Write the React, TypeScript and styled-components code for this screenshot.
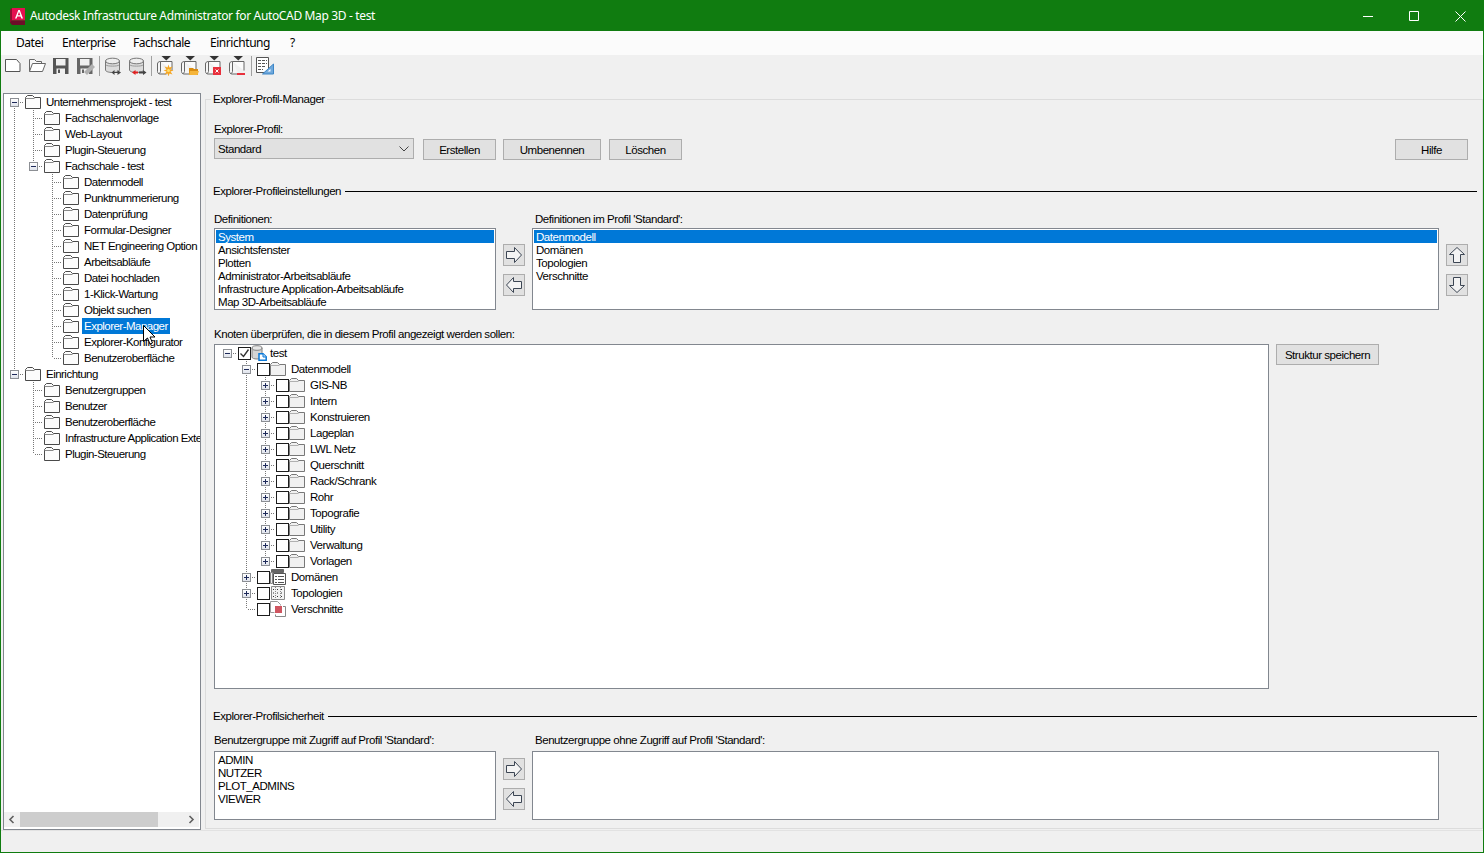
import { FC } from 'react';
import styled, { createGlobalStyle } from 'styled-components';

const GlobalStyle = createGlobalStyle`
  html, body {
    margin: 0;
    padding: 0;
    overflow: hidden;
    background: #f0f0f0;
  }
  * {
    box-sizing: border-box;
  }
`;

const uiFont = `"Liberation Sans", Arial, sans-serif`;
const titleFont = `"Noto Sans", "Open Sans", sans-serif`;

const Window = styled.div`
  width: 1484px;
  height: 853px;
  border: 1px solid #107c10;
  display: flex;
  flex-direction: column;
  background: #f0f0f0;
  color: #000;
  font: 11.5px/14px ${uiFont};
  letter-spacing: -0.45px;
`;

const TitleBar = styled.div`
  height: 30px;
  flex: none;
  display: flex;
  align-items: center;
  background: #107c10;
  color: #fff;
  padding-left: 9px;
  font: 12px/16px ${titleFont};
  letter-spacing: -0.35px;
`;

const TitleText = styled.span`
  margin-left: 5px;
  flex: 1;
`;

const WinButton = styled.div`
  width: 46px;
  height: 30px;
  display: flex;
  align-items: center;
  justify-content: center;
`;

const MenuBar = styled.div`
  height: 24px;
  flex: none;
  display: flex;
  align-items: center;
  padding-left: 6px;
  background: #fbfbfb;
  font: 12px/16px ${titleFont};
  letter-spacing: -0.45px;
`;

const MenuItem = styled.span<{ $w: number }>`
  width: ${(p) => p.$w}px;
  padding-left: 9px;
`;

const Toolbar = styled.div`
  height: 30px;
  flex: none;
  display: flex;
  align-items: flex-start;
`;

const ToolButton = styled.div`
  width: 24px;
  height: 22px;
  display: flex;
  align-items: center;
  justify-content: center;
`;

const ToolSep = styled.div`
  width: 4px;
  height: 22px;
  display: flex;
  justify-content: center;
  &::before {
    content: '';
    width: 1px;
    height: 20px;
    margin-top: 1px;
    background: #a0a0a0;
  }
`;

const Main = styled.div`
  flex: 1;
  min-height: 0;
  display: flex;
  padding: 8px 0 0 2px;
`;

const TreePanel = styled.div`
  position: relative;
  width: 198px;
  flex: none;
  height: 737px;
  display: flex;
  flex-direction: column;
  background: #fff;
  border: 1px solid #82878f;
`;

const TreeBody = styled.div<{ $pad: number }>`
  flex: 1;
  min-height: 0;
  overflow: hidden;
  padding-left: ${(p) => p.$pad}px;
  letter-spacing: -0.52px;
`;

const Row = styled.div`
  height: 16px;
  display: flex;
  align-items: center;
  white-space: nowrap;
`;

const Cell = styled.div<{ $code: string }>`
  position: relative;
  width: 19px;
  height: 16px;
  flex: none;
  &::before {
    content: '';
    position: absolute;
    left: 9px;
    width: 1px;
    top: ${(p) => (p.$code === 'r' ? '8px' : '0')};
    bottom: ${(p) => (p.$code === 'L' ? '8px' : '0')};
    display: ${(p) => (p.$code === ' ' || p.$code === '-' ? 'none' : 'block')};
    background: repeating-linear-gradient(to bottom, #777 0 1px, transparent 1px 2px);
  }
  &::after {
    content: '';
    position: absolute;
    left: 10px;
    right: 0;
    top: 8px;
    height: 1px;
    display: ${(p) => (p.$code === ' ' || p.$code === '|' ? 'none' : 'block')};
    background: repeating-linear-gradient(to right, transparent 0 1px, #777 1px 2px);
  }
`;

const Expander = styled.div`
  position: absolute;
  z-index: 1;
  left: 5px;
  top: 4px;
  width: 9px;
  height: 9px;
  border: 1px solid #8c8f94;
  background: linear-gradient(#fff, #dfe3ec);
  display: flex;
  align-items: center;
  justify-content: center;
`;

const TreeIconBox = styled.div<{ $w: number; $ml: number }>`
  width: ${(p) => p.$w}px;
  margin-left: ${(p) => p.$ml}px;
  height: 16px;
  flex: none;
  display: flex;
  align-items: center;
`;

const CheckBox = styled.div`
  width: 13px;
  height: 13px;
  margin-left: 1px;
  flex: none;
  background: #fff;
  border: 1px solid #1c1c1c;
  display: flex;
  align-items: center;
  justify-content: center;
`;

const NodeLabel = styled.span<{ $sel?: boolean; $ml: number }>`
  margin-left: ${(p) => p.$ml}px;
  padding: 0 2px;
  height: 16px;
  line-height: 16px;
  background: ${(p) => (p.$sel ? '#0078d7' : 'transparent')};
  color: ${(p) => (p.$sel ? '#fff' : '#000')};
`;

const ScrollBar = styled.div`
  height: 15px;
  flex: none;
  margin: 0 1px 2px 0;
  display: flex;
  align-items: center;
  background: #f0f0f0;
`;

const ScrollEnd = styled.div`
  width: 15px;
  height: 15px;
  flex: none;
  display: flex;
  align-items: center;
  justify-content: center;
`;

const ScrollTrack = styled.div`
  flex: 1;
  height: 15px;
  padding-left: 1px;
`;

const ScrollThumb = styled.div`
  width: 138px;
  height: 15px;
  background: #cdcdcd;
`;

const PointerWrap = styled.div`
  position: absolute;
  left: 139px;
  top: 231px;
  z-index: 2;
  line-height: 0;
`;

const Manager = styled.fieldset`
  flex: none;
  width: 1278px;
  height: 736px;
  margin: 0 0 0 4px;
  padding: 0 5px 0 8px;
  border: 1px solid #dcdcdc;
  min-width: 0;
`;

const ManagerLegend = styled.legend`
  margin-left: -3px;
  padding: 0 2px;
  line-height: 12px;
  height: 12px;
`;

const FieldLabel = styled.div<{ $mt: number }>`
  height: 14px;
  margin-top: ${(p) => p.$mt}px;
`;

const ProfileRow = styled.div`
  display: flex;
  align-items: flex-start;
  margin-top: 2px;
  height: 22px;
`;

const Combo = styled.div`
  width: 200px;
  height: 21px;
  display: flex;
  align-items: center;
  justify-content: space-between;
  padding: 0 4px 0 3px;
  background: #e1e1e1;
  border: 1px solid #adadad;
`;

const PushButton = styled.div<{ $w: number; $ml?: number; $mt?: number; $auto?: boolean }>`
  width: ${(p) => p.$w}px;
  height: 21px;
  margin-top: ${(p) => p.$mt ?? 0}px;
  margin-left: ${(p) => (p.$auto ? 'auto' : `${p.$ml ?? 0}px`)};
  margin-right: ${(p) => (p.$auto ? '9px' : '0')};
  flex: none;
  display: flex;
  align-items: center;
  justify-content: center;
  background: #e1e1e1;
  border: 1px solid #adadad;
`;

const Section = styled.div<{ $mt: number }>`
  display: flex;
  align-items: center;
  height: 14px;
  margin: ${(p) => p.$mt}px 0 0 -1px;
  gap: 4px;
  white-space: nowrap;
  &::after {
    content: '';
    flex: 1;
    height: 1px;
    background: #000;
  }
`;

const PairLabels = styled.div<{ $mt: number }>`
  display: grid;
  grid-template-columns: 318px 1fr;
  height: 14px;
  margin-top: ${(p) => p.$mt}px;
`;

const PairLabelRight = styled.div`
  padding-left: 3px;
`;

const PairRow = styled.div<{ $mt: number; $h: number }>`
  display: flex;
  height: ${(p) => p.$h}px;
  margin-top: ${(p) => p.$mt}px;
`;

const ListBox = styled.div<{ $w: number }>`
  width: ${(p) => p.$w}px;
  height: 100%;
  flex: none;
  padding: 1px;
  background: #fff;
  border: 1px solid #82878f;
  overflow: hidden;
`;

const ListItem = styled.div<{ $sel?: boolean }>`
  height: 13px;
  line-height: 15px;
  padding-left: 2px;
  white-space: nowrap;
  background: ${(p) => (p.$sel ? '#0078d7' : 'transparent')};
  color: ${(p) => (p.$sel ? '#fff' : '#000')};
`;

const ArrowColumn = styled.div<{ $top: number; $w: number }>`
  width: ${(p) => p.$w}px;
  flex: none;
  padding: ${(p) => p.$top}px 0 0 7px;
  display: flex;
  flex-direction: column;
  gap: 8px;
`;

const ArrowButton = styled.div`
  width: 22px;
  height: 22px;
  display: flex;
  align-items: center;
  justify-content: center;
  background: #e1e1e1;
  border: 1px solid #adadad;
`;

const StructureRow = styled.div`
  display: flex;
  align-items: flex-start;
  height: 345px;
  margin-top: 3px;
`;

const StructureTree = styled.div`
  width: 1055px;
  height: 345px;
  flex: none;
  background: #fff;
  border: 1px solid #82878f;
  overflow: hidden;
  padding-left: 3px;
`;

const StatusBar = styled.div`
  height: 22px;
  flex: none;
  border-top: 1px solid #e2e2e2;
`;

const FolderIcon: FC<{ $light?: boolean }> = ({ $light }) => (
  <svg width="16" height="14" viewBox="0 0 16 14">
    <path
      d="M.5 13.5V2.5L2.5.5H7.5L9.5 2.5H15.5V13.5Z"
      fill={$light ? '#f1f1f1' : '#fcfcfc'}
      stroke={$light ? '#787878' : '#4a4a4a'}
    />
    <path d="M.5 3.5H9.5" stroke={$light ? '#b0b0b0' : '#8a8a8a'} />
  </svg>
);

const DbDocIcon = () => (
  <svg width="16" height="16" viewBox="0 0 16 16">
    <path d="M1 3v9c0 1.300 2.200 2 5 2s5-.7 5-2V3z" fill="#d4d4d4" stroke="#808080" />
    <ellipse cx="6" cy="3" rx="5" ry="2.300" fill="#e6e6e6" stroke="#808080" />
    <path d="M8 8.700h4l3.200 3v3.600H8z" fill="#fff" stroke="#0a78d6" strokeWidth="1.500" />
    <path d="M12 8.700V12h3.200" fill="#bcdaf6" stroke="#0a78d6" />
  </svg>
);

const DomainIcon = () => (
  <svg width="16" height="16" viewBox="0 0 16 16">
    <path d="M1.5.5h12v3h-12z" fill="#666" stroke="#666" />
    <path d="M.5 3.5h2v11h-2z" fill="#eee" stroke="#888" />
    <path d="M3.5 4.5h12v11h-12z" fill="#fff" stroke="#555" />
    <path d="M5 7.5h2M8 7.5h6M5 10.5h2M8 10.5h6M5 13.5h2M8 13.5h6" stroke="#555" />
  </svg>
);

const TopologyIcon = () => (
  <svg width="16" height="16" viewBox="0 0 16 16">
    <path d="M1.5 1.5h13v13h-13z" fill="#f4f4f4" stroke="#8a8a8a" />
    <path
      d="M3 4.5h2M7 4.5h2M11 4.5h2M3 8h2M7 8h2M11 8h2M3 11.5h2M7 11.5h2M11 11.5h2"
      stroke="#333"
      strokeDasharray="1 1"
    />
    <path d="M5.5 2v12M10.5 2v12" stroke="#888" strokeDasharray="1 1" />
  </svg>
);

const CutIcon = () => (
  <svg width="16" height="16" viewBox="0 0 16 16">
    <path d="M.5 .5h7l3 3v1" fill="#fff" stroke="#999" />
    <path d="M.5 .5v11h4" fill="none" stroke="#999" />
    <path d="M13 5.500h2.500v10h-10v-2" fill="none" stroke="#888" />
    <rect x="5" y="5" width="7" height="7" fill="#cf5560" />
  </svg>
);

const nodeIcons: Record<string, JSX.Element> = {
  folder: <FolderIcon />,
  light: <FolderIcon $light />,
  db: <DbDocIcon />,
  domain: <DomainIcon />,
  topo: <TopologyIcon />,
  cut: <CutIcon />,
};

type Node = {
  cells: string;
  exp?: '+' | '-';
  icon: string;
  label: string;
  sel?: boolean;
  check?: boolean;
  checked?: boolean;
};

const ExpanderMark: FC<{ open: boolean }> = ({ open }) => (
  <svg width="7" height="7" viewBox="0 0 7 7">
    <path d={open ? 'M1 3.5h5' : 'M1 3.5h5M3.5 1v5'} stroke="#1e2a5a" />
  </svg>
);

const TreeRow: FC<{ node: Node }> = ({ node }) => {
  const codes = node.cells.split('');
  const last = codes.length - 1;
  const isRoot = codes.length === 1;
  return (
    <Row>
      {codes.map((code, i) => (
        <Cell key={i} $code={code}>
          {i === last && node.exp && (
            <Expander>
              <ExpanderMark open={node.exp === '-'} />
            </Expander>
          )}
        </Cell>
      ))}
      {node.check && (
        <CheckBox>
          {node.checked && (
            <svg width="11" height="11" viewBox="0 0 11 11">
              <path d="M1.500 5.500l3 3 5-7" fill="none" stroke="#333" strokeWidth="1.400" />
            </svg>
          )}
        </CheckBox>
      )}
      <TreeIconBox $w={16} $ml={node.check ? 0 : 1}>
        {nodeIcons[node.icon]}
      </TreeIconBox>
      <NodeLabel $sel={node.sel} $ml={node.check ? (isRoot ? 1 : 3) : 3}>
        {node.label}
      </NodeLabel>
    </Row>
  );
};

const projectTree: Node[] = [
  { cells: 'r', exp: '-', icon: 'folder', label: 'Unternehmensprojekt - test' },
  { cells: '|T', icon: 'folder', label: 'Fachschalenvorlage' },
  { cells: '|T', icon: 'folder', label: 'Web-Layout' },
  { cells: '|T', icon: 'folder', label: 'Plugin-Steuerung' },
  { cells: '|L', exp: '-', icon: 'folder', label: 'Fachschale - test' },
  { cells: '| T', icon: 'folder', label: 'Datenmodell' },
  { cells: '| T', icon: 'folder', label: 'Punktnummerierung' },
  { cells: '| T', icon: 'folder', label: 'Datenprüfung' },
  { cells: '| T', icon: 'folder', label: 'Formular-Designer' },
  { cells: '| T', icon: 'folder', label: 'NET Engineering Option' },
  { cells: '| T', icon: 'folder', label: 'Arbeitsabläufe' },
  { cells: '| T', icon: 'folder', label: 'Datei hochladen' },
  { cells: '| T', icon: 'folder', label: '1-Klick-Wartung' },
  { cells: '| T', icon: 'folder', label: 'Objekt suchen' },
  { cells: '| T', icon: 'folder', label: 'Explorer-Manager', sel: true },
  { cells: '| T', icon: 'folder', label: 'Explorer-Konfigurator' },
  { cells: '| L', icon: 'folder', label: 'Benutzeroberfläche' },
  { cells: 'L', exp: '-', icon: 'folder', label: 'Einrichtung' },
  { cells: ' T', icon: 'folder', label: 'Benutzergruppen' },
  { cells: ' T', icon: 'folder', label: 'Benutzer' },
  { cells: ' T', icon: 'folder', label: 'Benutzeroberfläche' },
  { cells: ' T', icon: 'folder', label: 'Infrastructure Application Extension' },
  { cells: ' L', icon: 'folder', label: 'Plugin-Steuerung' },
];

const modelFolders = [
  'GIS-NB',
  'Intern',
  'Konstruieren',
  'Lageplan',
  'LWL Netz',
  'Querschnitt',
  'Rack/Schrank',
  'Rohr',
  'Topografie',
  'Utility',
  'Verwaltung',
  'Vorlagen',
];

const structureTree: Node[] = [
  { cells: '-', exp: '-', icon: 'db', label: 'test', check: true, checked: true },
  { cells: ' T', exp: '-', icon: 'light', label: 'Datenmodell', check: true },
  ...modelFolders.map(
    (label, i): Node => ({
      cells: i === modelFolders.length - 1 ? ' |L' : ' |T',
      exp: '+',
      icon: 'light',
      label,
      check: true,
    }),
  ),
  { cells: ' T', exp: '+', icon: 'domain', label: 'Domänen', check: true },
  { cells: ' T', exp: '+', icon: 'topo', label: 'Topologien', check: true },
  { cells: ' L', icon: 'cut', label: 'Verschnitte', check: true },
];

const BlockArrow: FC<{ turn: number }> = ({ turn }) => (
  <svg width="18" height="18" viewBox="0 0 18 18" style={{ transform: `rotate(${turn}deg)` }}>
    <path
      d="M1.5 5.5h8V1.5L16.5 9l-7 7.5v-4h-8z"
      fill="#f4f4f4"
      stroke="#3c4654"
      strokeLinejoin="miter"
    />
  </svg>
);

const AppLogo = () => (
  <svg width="15" height="17" viewBox="0 0 15 17">
    <path d="M2 0h13v12.5H2z" fill="#e51050" />
    <path d="M0 1.5l2-1.5v13l-2 1.5z" fill="#8c1030" />
    <path d="M0 14.5l2-2h13v4.500H2z" fill="#6d0d28" />
    <path d="M5 10.500L8.300 2h1.500l3.200 8.500h-1.700l-.7-2H7.300l-.7 2zM7.800 7.200h2.500L9 3.800z" fill="#fff" />
  </svg>
);

const floppy = (color: string) => (
  <g transform="translate(1 1)">
    <path d="M1 1h15.500v16H1z" fill={color} />
    <path d="M4 2h9.500v6.500H4z" fill="#f0f0f0" />
    <path d="M4.500 11.500h8.500v5.500H4.500z" fill="#f0f0f0" />
    <path d="M6 12.500h2v3.500H6z" fill={color} />
  </g>
);

const cylinder = (
  <>
    <path d="M2.500 5v9c0 1.400 3 2.500 7 2.500s7-1.100 7-2.500V5z" fill="#dcdcdc" stroke="#777" />
    <ellipse cx="9.500" cy="5" rx="7" ry="2.800" fill="#eee" stroke="#777" />
    <path d="M3 9c1 1.500 12 1.500 13 0" fill="none" stroke="#999" />
  </>
);

const scroll = (
  <>
    <path
      d="M5.500 5.500C3.500 5.500 2.500 6.500 2.500 8v7.500c0 1.200 1 2.500 2.500 2.500h6.500"
      fill="#f6f6f6"
      stroke="#666"
    />
    <path d="M5.500 5.500h11.500v9" fill="#fbfbfb" stroke="#666" />
    <path d="M5.500 5.500v10c0 1-1 2-2 2" fill="none" stroke="#666" />
    <path d="M6.500 0h9.500l-4.750 4.500z" fill="#333" />
  </>
);

const toolIcons: Record<string, JSX.Element> = {
  new: <path d="M2.500 3.500h11l3.500 4v8H2.500z" fill="#fff" stroke="#555" />,
  open: (
    <>
      <path d="M2.500 15.500v-12h5l2 2h5v2" fill="#f8f8f8" stroke="#666" />
      <path d="M2.500 15.500l3-8h13l-3 8z" fill="#fff" stroke="#666" />
    </>
  ),
  save: floppy('#555'),
  saveAs: (
    <>
      {floppy('#666')}
      <path d="M9 16l8-8 3 3-8 8z" fill="#b0b0b0" />
    </>
  ),
  dbImport: (
    <>
      {cylinder}
      <path d="M8.500 16.500l3-2.500v2h3v-2l3.500 2.500-3.500 2.500v-2h-3v2z" fill="#444" />
    </>
  ),
  dbExport: (
    <>
      {cylinder}
      <path d="M5 16.500l3.500-2.500v1.500H11v2H8.500V19z" fill="#e02020" />
      <path d="M12 15.500h4V14l3.500 2.500-3.500 2.500v-1.500h-4z" fill="#444" />
    </>
  ),
  scrollNew: (
    <>
      {scroll}
      <path
        d="M13.500 8.500l1 3 3-1-2 3 3 1-3 1 2 3-3-1-1 3-1-3-3 1 2-3-3-1 3-1-2-3 3 1z"
        fill="#f5a623"
      />
      <circle cx="13.500" cy="14.500" r="1.500" fill="#ffe070" />
    </>
  ),
  scrollOpen: (
    <>
      {scroll}
      <path d="M10 12h4l1 1h4v6h-9z" fill="#d98c10" />
      <path d="M11 15h9l-1.500 4H10z" fill="#f5b53a" />
    </>
  ),
  scrollDel: (
    <>
      {scroll}
      <rect x="10" y="11" width="8" height="8" fill="#e8303c" />
      <path d="M12.500 13.500l3 3M15.500 13.500l-3 3" stroke="#fff" />
    </>
  ),
  scrollMinus: (
    <>
      {scroll}
      <rect x="10" y="17" width="8" height="2" fill="#e8303c" />
    </>
  ),
  table: (
    <>
      <path d="M1.500 1.500h12v15h-12z" fill="#fff" stroke="#555" />
      <path d="M3 4.500h9M3 7.500h9M3 10.500h7M3 13.500h5" stroke="#555" strokeDasharray="3 1" />
      <path d="M18.500 8v10h-11z" fill="#6ea8dc" stroke="#3d86c6" />
      <path d="M15.500 13v2.500h-3z" fill="#fff" />
    </>
  ),
};

const ToolIcon: FC<{ name: string }> = ({ name }) => (
  <ToolButton>
    <svg width="20" height="20" viewBox="0 0 20 20">
      {toolIcons[name]}
    </svg>
  </ToolButton>
);

const menus: [string, number][] = [
  ['Datei', 46],
  ['Enterprise', 71],
  ['Fachschale', 77],
  ['Einrichtung', 80],
  ['?', 20],
];

const definitionItems = [
  'System',
  'Ansichtsfenster',
  'Plotten',
  'Administrator-Arbeitsabläufe',
  'Infrastructure Application-Arbeitsabläufe',
  'Map 3D-Arbeitsabläufe',
];

const profileItems = ['Datenmodell', 'Domänen', 'Topologien', 'Verschnitte'];
const groupItems = ['ADMIN', 'NUTZER', 'PLOT_ADMINS', 'VIEWER'];

const App: FC = () => {
  return (
    <>
      <GlobalStyle />
      <Window>
        <TitleBar>
          <AppLogo />
          <TitleText>Autodesk Infrastructure Administrator for AutoCAD Map 3D - test</TitleText>
          <WinButton>
            <svg width="11" height="11" viewBox="0 0 11 11">
              <path d="M0 5.500h10" stroke="#fff" />
            </svg>
          </WinButton>
          <WinButton>
            <svg width="11" height="11" viewBox="0 0 11 11">
              <path d="M.5 .5h9v9h-9z" fill="none" stroke="#fff" />
            </svg>
          </WinButton>
          <WinButton>
            <svg width="11" height="11" viewBox="0 0 11 11">
              <path d="M.5 .5l10 10M10.500 .5l-10 10" stroke="#fff" />
            </svg>
          </WinButton>
        </TitleBar>
        <MenuBar>
          {menus.map(([label, w]) => (
            <MenuItem key={label} $w={w}>
              {label}
            </MenuItem>
          ))}
        </MenuBar>
        <Toolbar>
          <ToolIcon name="new" />
          <ToolIcon name="open" />
          <ToolIcon name="save" />
          <ToolIcon name="saveAs" />
          <ToolSep />
          <ToolIcon name="dbImport" />
          <ToolIcon name="dbExport" />
          <ToolSep />
          <ToolIcon name="scrollNew" />
          <ToolIcon name="scrollOpen" />
          <ToolIcon name="scrollDel" />
          <ToolIcon name="scrollMinus" />
          <ToolSep />
          <ToolIcon name="table" />
        </Toolbar>
        <Main>
          <TreePanel>
            <TreeBody $pad={1}>
              {projectTree.map((node, i) => (
                <TreeRow key={i} node={node} />
              ))}
            </TreeBody>
            <ScrollBar>
              <ScrollEnd>
                <svg width="9" height="9" viewBox="0 0 9 9">
                  <path d="M6.500 1L3 4.500 6.500 8" fill="none" stroke="#606060" strokeWidth="1.600" />
                </svg>
              </ScrollEnd>
              <ScrollTrack>
                <ScrollThumb />
              </ScrollTrack>
              <ScrollEnd>
                <svg width="9" height="9" viewBox="0 0 9 9">
                  <path d="M2.500 1L6 4.500 2.500 8" fill="none" stroke="#606060" strokeWidth="1.600" />
                </svg>
              </ScrollEnd>
            </ScrollBar>
            <PointerWrap>
              <svg width="13" height="20" viewBox="0 0 13 20">
                <path
                  d="M.5 .5v16l4-3.500 2.500 6 2.500-1-2.500-6h5z"
                  fill="#fff"
                  stroke="#000"
                />
              </svg>
            </PointerWrap>
          </TreePanel>
          <Manager>
            <ManagerLegend>Explorer-Profil-Manager</ManagerLegend>
            <FieldLabel $mt={17}>Explorer-Profil:</FieldLabel>
            <ProfileRow>
              <Combo>
                Standard
                <svg width="10" height="6" viewBox="0 0 10 6">
                  <path d="M.5 .5L5 5l4.500-4.500" fill="none" stroke="#444" />
                </svg>
              </Combo>
              <PushButton $w={73} $ml={9} $mt={1}>
                Erstellen
              </PushButton>
              <PushButton $w={98} $ml={7} $mt={1}>
                Umbenennen
              </PushButton>
              <PushButton $w={73} $ml={8} $mt={1}>
                Löschen
              </PushButton>
              <PushButton $w={73} $mt={1} $auto>
                Hilfe
              </PushButton>
            </ProfileRow>
            <Section $mt={24}>Explorer-Profileinstellungen</Section>
            <PairLabels $mt={14}>
              <div>Definitionen:</div>
              <PairLabelRight>Definitionen im Profil 'Standard':</PairLabelRight>
            </PairLabels>
            <PairRow $mt={2} $h={82}>
              <ListBox $w={282}>
                {definitionItems.map((item, i) => (
                  <ListItem key={item} $sel={i === 0}>
                    {item}
                  </ListItem>
                ))}
              </ListBox>
              <ArrowColumn $top={16} $w={36}>
                <ArrowButton>
                  <BlockArrow turn={0} />
                </ArrowButton>
                <ArrowButton>
                  <BlockArrow turn={180} />
                </ArrowButton>
              </ArrowColumn>
              <ListBox $w={907}>
                {profileItems.map((item, i) => (
                  <ListItem key={item} $sel={i === 0}>
                    {item}
                  </ListItem>
                ))}
              </ListBox>
              <ArrowColumn $top={16} $w={29}>
                <ArrowButton>
                  <BlockArrow turn={-90} />
                </ArrowButton>
                <ArrowButton>
                  <BlockArrow turn={90} />
                </ArrowButton>
              </ArrowColumn>
            </PairRow>
            <FieldLabel $mt={17}>Knoten überprüfen, die in diesem Profil angezeigt werden sollen:</FieldLabel>
            <StructureRow>
              <StructureTree>
                {structureTree.map((node, i) => (
                  <TreeRow key={i} node={node} />
                ))}
              </StructureTree>
              <PushButton $w={103} $ml={7}>
                Struktur speichern
              </PushButton>
            </StructureRow>
            <Section $mt={20}>Explorer-Profilsicherheit</Section>
            <PairLabels $mt={10}>
              <div>Benutzergruppe mit Zugriff auf Profil 'Standard':</div>
              <PairLabelRight>Benutzergruppe ohne Zugriff auf Profil 'Standard':</PairLabelRight>
            </PairLabels>
            <PairRow $mt={4} $h={69}>
              <ListBox $w={282}>
                {groupItems.map((item) => (
                  <ListItem key={item}>{item}</ListItem>
                ))}
              </ListBox>
              <ArrowColumn $top={7} $w={36}>
                <ArrowButton>
                  <BlockArrow turn={0} />
                </ArrowButton>
                <ArrowButton>
                  <BlockArrow turn={180} />
                </ArrowButton>
              </ArrowColumn>
              <ListBox $w={907} />
            </PairRow>
          </Manager>
        </Main>
        <StatusBar />
      </Window>
    </>
  );
};

export default App;
